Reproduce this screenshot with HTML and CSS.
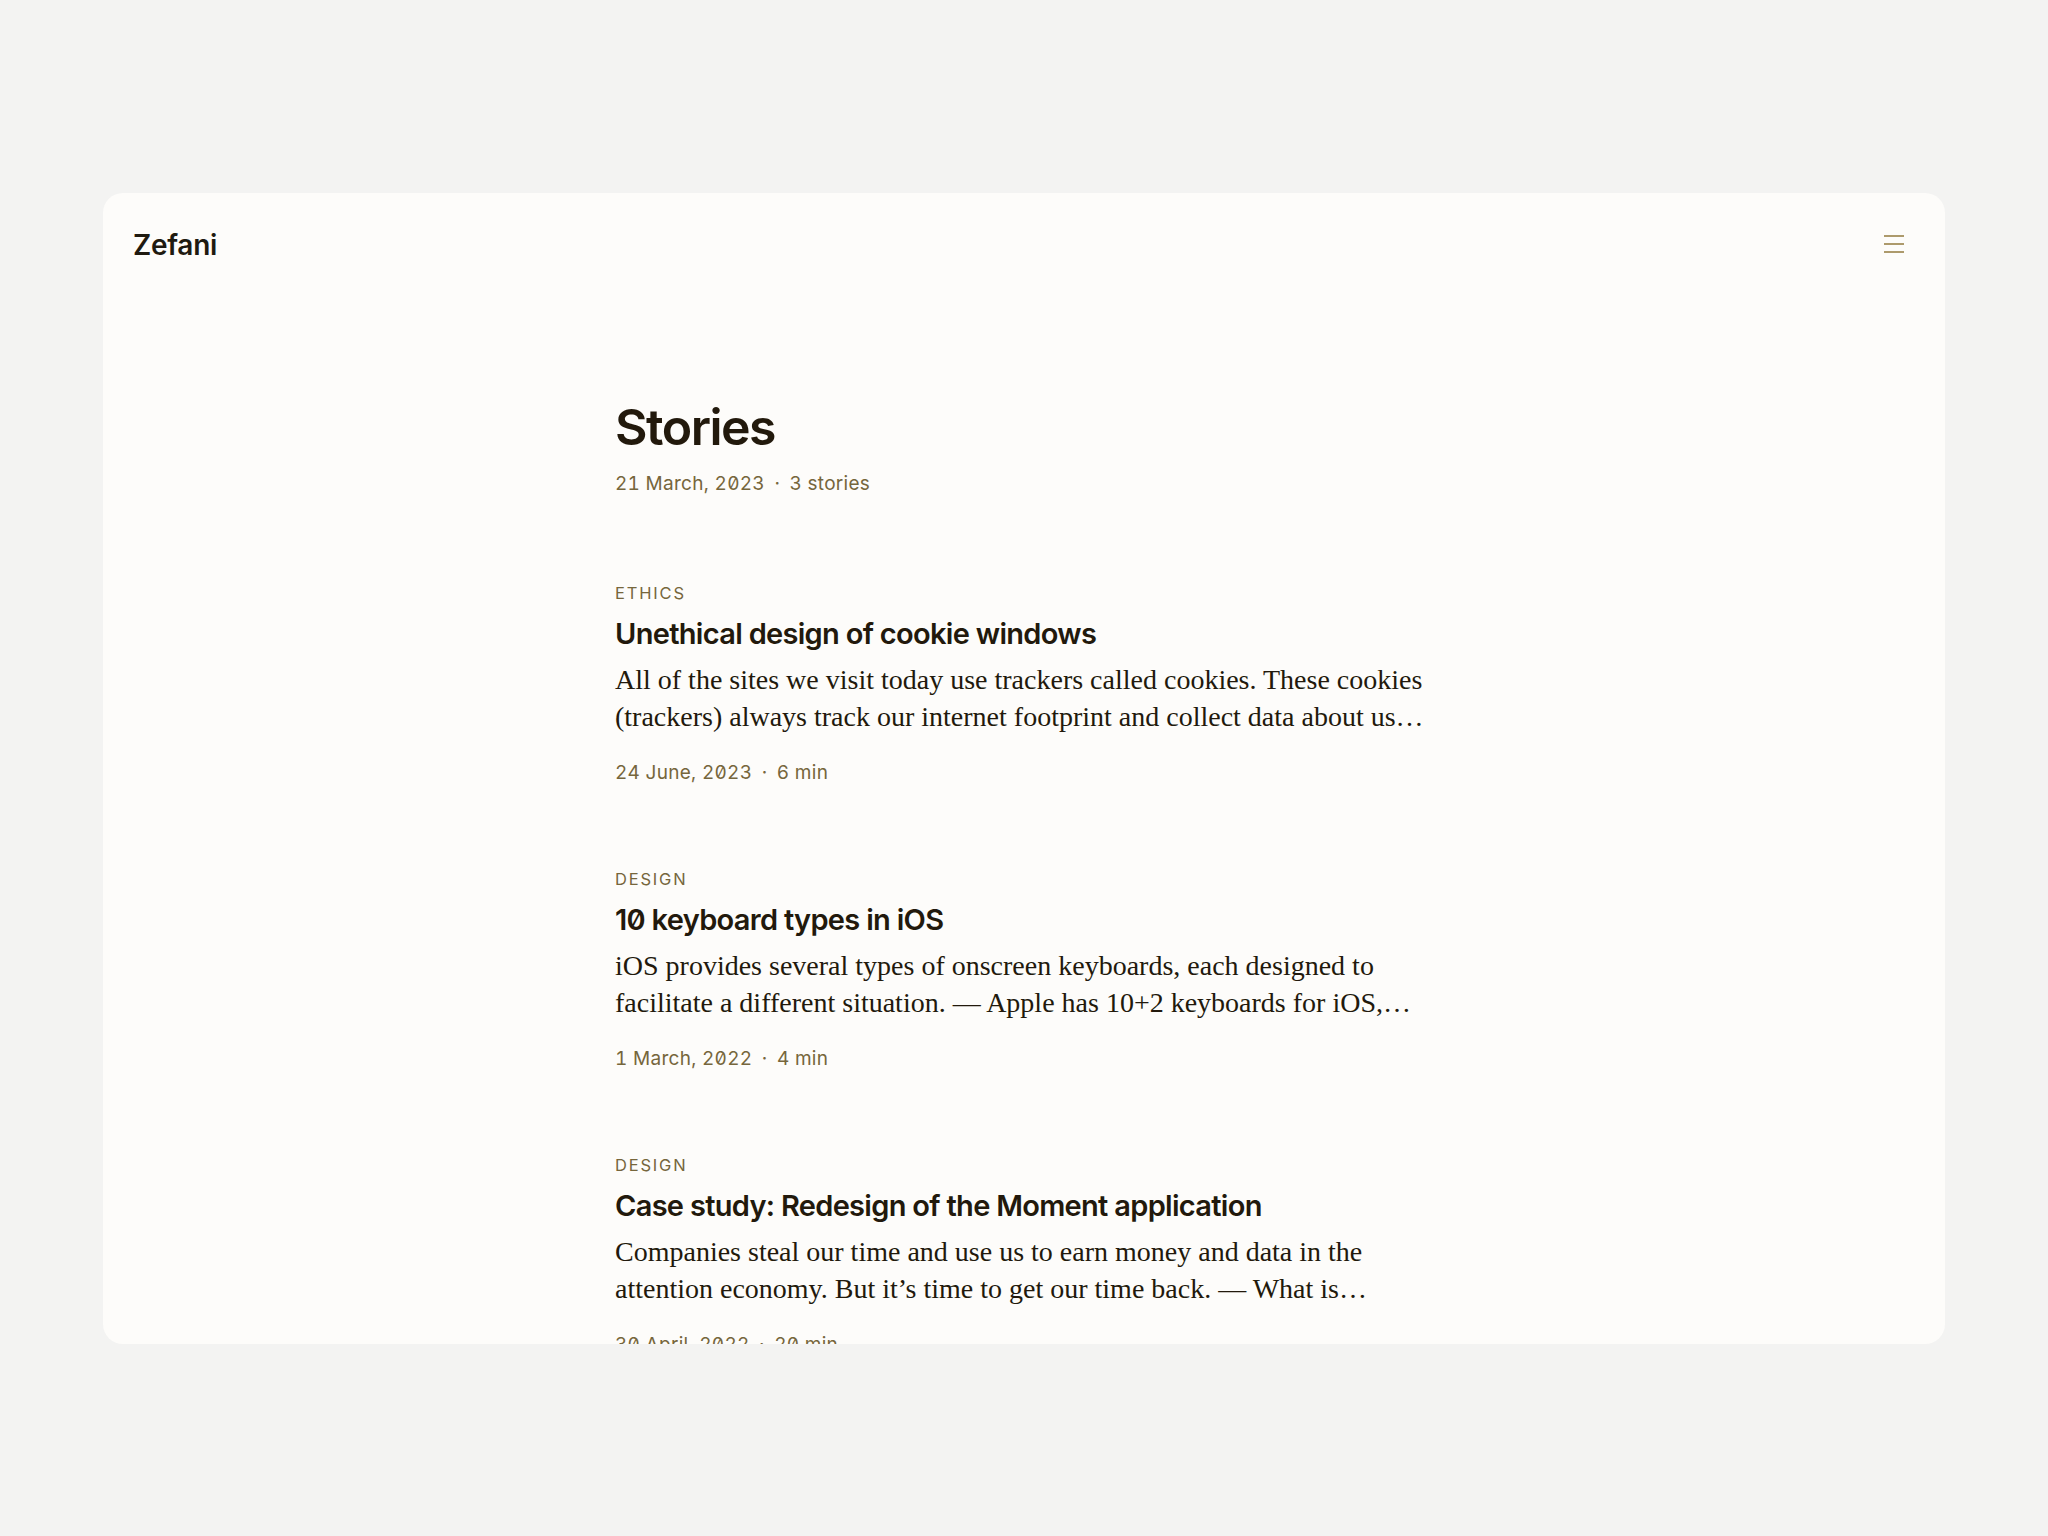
FILE: index.html
```html
<!DOCTYPE html>
<html lang="en">
<head>
<meta charset="utf-8">
<title>Zefani — Stories</title>
<link rel="stylesheet" href="styles.css">
</head>
<body>
<div class="card">
  <header class="topbar">
    <a class="logo" href="#">Zefani</a>
    <button class="menu" aria-label="Menu">
      <svg width="24" height="24" viewBox="0 0 24 24" fill="none" stroke="currentColor" stroke-width="2" shape-rendering="crispEdges">
        <path d="M2 4h20M2 12h20M2 20h20"/>
      </svg>
    </button>
  </header>
  <main class="content">
    <section class="intro">
      <h1 class="page-title">Stories</h1>
      <p class="meta">21 March, 2023 <span class="dot">·</span> 3 stories</p>
    </section>
    <article class="story">
      <p class="tag">ETHICS</p>
      <h2 class="story-title">Unethical design of cookie windows</h2>
      <p class="excerpt">All of the sites we visit today use trackers called cookies. These cookies (trackers) always track our internet footprint and collect data about us…</p>
      <p class="meta">24 June, 2023 <span class="dot">·</span> 6 min</p>
    </article>
    <article class="story">
      <p class="tag">DESIGN</p>
      <h2 class="story-title">10 keyboard types in iOS</h2>
      <p class="excerpt">iOS provides several types of onscreen keyboards, each designed to facilitate a different situation. — Apple has 10+2 keyboards for iOS,…</p>
      <p class="meta">1 March, 2022 <span class="dot">·</span> 4 min</p>
    </article>
    <article class="story">
      <p class="tag">DESIGN</p>
      <h2 class="story-title">Case study: Redesign of the Moment application</h2>
      <p class="excerpt">Companies steal our time and use us to earn money and data in the attention economy. But it’s time to get our time back. — What is…</p>
      <p class="meta">30 April, 2022 <span class="dot">·</span> 20 min</p>
    </article>
  </main>
</div>
</body>
</html>
```

FILE: styles.css
```css
* { box-sizing: border-box; }
html, body { margin: 0; padding: 0; }
body {
  background: #f3f3f2;
  height: 100vh;
  display: flex;
  align-items: center;
  justify-content: center;
  font-family: Inter, "Liberation Sans", sans-serif;
  color: #1f1a10;
}
.card {
  width: 1842px;
  height: 1151px;
  background: #fdfcfa;
  border-radius: 20px;
  overflow: hidden;
  display: flex;
  flex-direction: column;
}
.topbar {
  height: 104px;
  flex: none;
  display: flex;
  align-items: center;
  justify-content: space-between;
  padding: 0 39px 0 30px;
}
.logo {
  font-size: 28px;
  font-weight: 600;
  letter-spacing: -0.01em;
  color: #1f1a10;
  text-decoration: none;
}
.menu {
  background: none;
  border: 0;
  padding: 0;
  width: 24px;
  height: 24px;
  color: #ad9a6c;
  display: block;
  margin-top: -2px;
}
.menu svg { display: block; }
.content {
  width: 818px;
  margin: 0 auto;
  padding-top: 100px;
  flex: none;
}
.page-title {
  margin: 0;
  font-size: 50px;
  line-height: 60px;
  font-weight: 600;
  letter-spacing: -0.03em;
  color: #22190c;
}
.meta {
  margin: 0;
  font-size: 19px;
  line-height: 28px;
  color: #76663c;
  letter-spacing: 0.015em;
  font-feature-settings: "zero" 1, "tnum" 1;
}
.intro .meta { margin-top: 13px; }
.dot { margin: 0 4px; }
.intro { margin-bottom: 85px; }
.story { margin-bottom: 82px; }
.tag {
  margin: 0;
  font-size: 16.5px;
  line-height: 20px;
  letter-spacing: 0.11em;
  color: #76663c;
}
.story-title {
  margin: 12px 0 0;
  font-size: 29px;
  line-height: 38px;
  font-weight: 600;
  letter-spacing: -0.024em;
  color: #22190c;
  font-feature-settings: "zero" 1;
}
.excerpt {
  margin: 8px 0 0;
  font-family: "Liberation Serif", "Times New Roman", serif;
  font-size: 28px;
  line-height: 37px;
  color: #22190c;
}
.story .meta { margin-top: 24px; }
```
